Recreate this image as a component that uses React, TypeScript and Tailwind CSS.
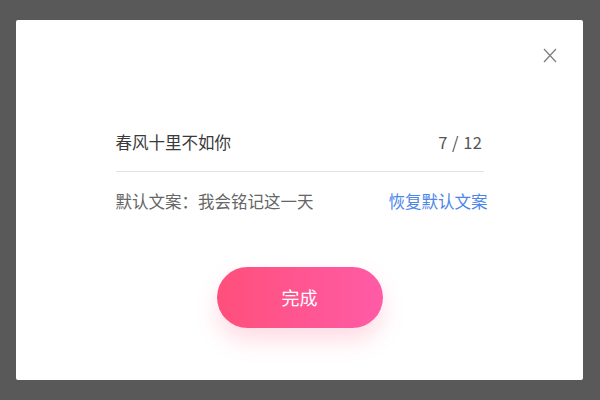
import React from "react";

export default function App() {
  return (
    <div
      className="w-[600px] h-[400px] bg-[#595959] pl-[16px] pt-[20px]"
      style={{ fontFamily: '"Noto Sans CJK SC", "Noto Sans", sans-serif' }}
    >
      <div className="relative w-[567px] h-[360px] bg-white rounded-[2px] flex flex-col items-center pt-[108px]">
        <button className="absolute left-[526px] top-[27px] w-[15px] h-[16px] flex items-center justify-center">
          <svg width="14" height="15" viewBox="0 0 14 15">
            <path d="M1 1 L13 14 M13 1 L1 14" stroke="#808080" strokeWidth="1.3" fill="none" />
          </svg>
        </button>
        <div className="w-[368px] h-[28px] flex items-center justify-between text-[16.5px] leading-none">
          <span className="text-[#3a3a3a]">春风十里不如你</span>
          <span className="text-[#555555] mr-[1px] tracking-[0.5px]">7 / 12</span>
        </div>
        <div className="w-[368px] h-px bg-[#e3e3e3] mt-[15px]" />
        <div className="w-[368px] h-[28px] mt-[15px] flex items-center justify-between text-[16.5px] leading-none">
          <span className="text-[#666666]">默认文案：我会铭记这一天</span>
          <span className="text-[#4d86ea] mr-[-4px]">恢复默认文案</span>
        </div>
        <button className="mt-[52px] w-[166px] h-[61px] rounded-full bg-gradient-to-r from-[#ff4f7b] to-[#ff5ba6] text-white text-[18px] shadow-[0_12px_22px_rgba(255,90,130,0.22)]">
          完成
        </button>
      </div>
    </div>
  );
}
